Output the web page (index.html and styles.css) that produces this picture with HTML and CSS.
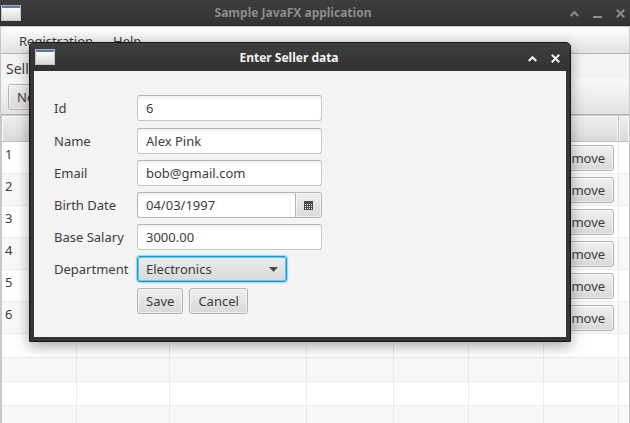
FILE: index.html
```html
<!DOCTYPE html>
<html lang="en">
<head>
<meta charset="utf-8">
<title>Sample JavaFX application</title>
<link rel="stylesheet" href="styles.css">
</head>
<body>
<main class="window">
  <header class="titlebar">
    <span class="app-icon"></span>
    <h1 class="title">Sample JavaFX application</h1>
    <div class="controls">
      <button class="control" aria-label="Roll up"><svg viewBox="0 0 9 9"><path d="M0.7 7 4.5 3.2 8.3 7"/></svg></button>
      <button class="control" aria-label="Minimize"><svg viewBox="0 0 9 9"><path d="M0 8H9"/></svg></button>
      <button class="control" aria-label="Close"><svg viewBox="0 0 9 9"><path d="M0.8 0.8 8.2 8.2M8.2 0.8 0.8 8.2"/></svg></button>
    </div>
  </header>
  <div class="content">
    <nav class="menubar">
      <button class="menu">Registration</button>
      <button class="menu">Help</button>
    </nav>
    <h2 class="heading">Seller List</h2>
    <div class="toolbar"><button class="button">New</button></div>
    <table class="sellers">
      <colgroup><col class="c-id"><col class="c-name"><col class="c-email"><col class="c-date"><col class="c-action"><col class="c-action"><col class="c-action"><col></colgroup>
      <thead><tr><th></th><th></th><th></th><th></th><th></th><th></th><th></th><th></th></tr></thead>
      <tbody>
        <tr><td>1</td><td></td><td></td><td></td><td></td><td></td><td><button class="button">Remove</button></td><td></td></tr>
        <tr><td>2</td><td></td><td></td><td></td><td></td><td></td><td><button class="button">Remove</button></td><td></td></tr>
        <tr><td>3</td><td></td><td></td><td></td><td></td><td></td><td><button class="button">Remove</button></td><td></td></tr>
        <tr><td>4</td><td></td><td></td><td></td><td></td><td></td><td><button class="button">Remove</button></td><td></td></tr>
        <tr><td>5</td><td></td><td></td><td></td><td></td><td></td><td><button class="button">Remove</button></td><td></td></tr>
        <tr><td>6</td><td></td><td></td><td></td><td></td><td></td><td><button class="button">Remove</button></td><td></td></tr>
        <tr class="empty"><td></td><td></td><td></td><td></td><td></td><td></td><td></td><td></td></tr>
        <tr class="empty"><td></td><td></td><td></td><td></td><td></td><td></td><td></td><td></td></tr>
        <tr class="empty"><td></td><td></td><td></td><td></td><td></td><td></td><td></td><td></td></tr>
        <tr class="empty"><td></td><td></td><td></td><td></td><td></td><td></td><td></td><td></td></tr>
      </tbody>
    </table>
  </div>
</main>

<section class="dialog" role="dialog" aria-labelledby="dialog-title">
  <header class="titlebar titlebar-active">
    <span class="app-icon"></span>
    <h2 class="title" id="dialog-title">Enter Seller data</h2>
    <div class="controls">
      <button class="control" aria-label="Roll up"><svg viewBox="0 0 9 9"><path d="M0.7 7 4.5 3.2 8.3 7"/></svg></button>
      <button class="control" aria-label="Close"><svg viewBox="0 0 9 9"><path d="M0.8 0.8 8.2 8.2M8.2 0.8 0.8 8.2"/></svg></button>
    </div>
  </header>
  <form class="form">
    <label for="id">Id</label>
    <input class="field" id="id" type="text" value="6">
    <label for="name">Name</label>
    <input class="field" id="name" type="text" value="Alex Pink">
    <label for="email">Email</label>
    <input class="field" id="email" type="text" value="bob@gmail.com">
    <label for="birth">Birth Date</label>
    <div class="date">
      <input class="field" id="birth" type="text" value="04/03/1997">
      <button class="button calendar" type="button" aria-label="Choose date">
        <svg viewBox="0 0 9 9" shape-rendering="crispEdges"><path fill="#4a4a4a" d="M0 0H9V9H0Z"/><path stroke="#e8e8e8" stroke-dasharray="1 1" d="M1 3.5H8M1 5.5H8M1 7.5H8"/></svg>
      </button>
    </div>
    <label for="salary">Base Salary</label>
    <input class="field" id="salary" type="text" value="3000.00">
    <label for="department">Department</label>
    <div class="combo">
      <select id="department"><option>Electronics</option></select>
      <svg class="arrow" viewBox="0 0 9 5"><path fill="#4a4a4a" d="M0 0H9L4.5 5Z"/></svg>
    </div>
    <div class="actions">
      <button class="button" type="button">Save</button>
      <button class="button" type="button">Cancel</button>
    </div>
  </form>
</section>
</body>
</html>
```
FILE: styles.css
```css
* { box-sizing: border-box; }

body {
  margin: 0;
  height: 100vh;
  overflow: hidden;
  background: #fff;
  color: #3c3c3c;
  font: 13px/18px "Noto Sans", sans-serif;
}

button, input, select { font: inherit; color: inherit; margin: 0; }

/* Window frame */
.window { min-height: 100vh; }

.titlebar {
  display: flex;
  align-items: center;
  height: 26px;
  padding: 0 5px 0 1px;
  background: linear-gradient(#3e3e3e, #323232);
  color: #8c8c8c;
}

.titlebar-active { height: 28px; padding: 0 10px 0 5px; color: #f4f4f2; border-radius: 4px 4px 0 0; }
.titlebar-active .title, .titlebar-active .controls { padding-top: 2px; }

.app-icon {
  width: 20px;
  height: 16px;
  border: 1px solid #c4c4c0;
  border-top-color: #9aa9bd;
  background: linear-gradient(#5479b3 2px, #fdfdfd 2px, #d9dcd5);
}

.title { flex: 1; margin: 0; font-size: 12px; line-height: 18px; font-weight: 700; text-align: center; }

.controls { display: flex; gap: 14px; padding-left: 5px; }

.control { width: 9px; height: 9px; padding: 0; border: 0; background: none; display: flex; }
.control svg { width: 9px; height: 9px; fill: none; stroke: currentColor; stroke-width: 2; }

/* Main content */
.content { border: solid #c8c8c8; border-width: 1px 1px 0 1px; }

.menubar {
  display: flex;
  height: 27px;
  padding: 0 8px;
  border-bottom: 1px solid #b5b5b5;
  background: linear-gradient(#fdfdfd, #e3e3e3);
}
.menu { padding: 2px 10px 0; border: 0; background: none; }

.heading { margin: 0; height: 25px; padding: 6px 5px 0; background: #f4f4f4; font-size: 14px; line-height: 18px; font-weight: 400; }

.toolbar { height: 36px; padding: 5px 7px; border-bottom: 1px solid #b5b5b5; background: linear-gradient(#fafafa, #e2e2e2); }

.button {
  height: 26px;
  padding: 0 8px;
  border: 1px solid #b4b4b4;
  border-radius: 3px;
  background: linear-gradient(#f0f0f0, #d9d9d9);
  box-shadow: inset 0 0 0 1px rgba(255, 255, 255, .55);
  line-height: 24px;
}

.sellers {
  width: 100%;
  table-layout: fixed;
  border-spacing: 0;
  border: solid #c8c8c8;
  border-width: 1px 0 0 1px;
}
.c-id { width: 75px; }
.c-name { width: 93px; }
.c-email { width: 137px; }
.c-date { width: 87px; }
.c-action { width: 75px; }

.sellers th {
  height: 26px;
  padding: 0;
  border: solid #c0c0c0;
  border-width: 0 1px 1px 0;
  background: linear-gradient(#f0f0f0, #d9d9d9);
  box-shadow: inset 1px 1px #fafafa, inset -1px 0 #fafafa;
}
.sellers td {
  height: 32px;
  padding: 3px 4px 2px 3px;
  border: solid #ececec;
  border-width: 0 1px 1px 0;
  vertical-align: top;
}
.sellers th:last-child, .sellers td:last-child { border-right: 0; }
.sellers tbody tr:nth-child(even) { background: #f8f8f8; }
.sellers .empty td { height: 24px; }
.sellers .button { display: block; margin-left: auto; }

/* Dialog */
.dialog {
  position: absolute;
  top: 42px;
  left: 29px;
  width: 542px;
  border: 1px solid #161616;
  border-radius: 5px 5px 1px 1px;
  background: #343536;
  box-shadow: 0 4px 14px rgba(0, 0, 0, .35);
}

.form {
  display: grid;
  grid-template-columns: 83px 185px;
  grid-template-rows: 27px;
  grid-auto-rows: 26px;
  row-gap: 6px;
  margin: 0 4px 4px;
  padding: 24px 20px 23px;
  background: #f4f4f4;
}
.form label { padding-top: 4px; }

.field {
  width: 100%;
  min-width: 0;
  height: 26px;
  padding: 0 8px;
  border: 1px solid #c8c8c8;
  border-top-color: #b4b4b4;
  border-radius: 3px;
  background: linear-gradient(#f0f0f0, #fff 4px);
  outline: 0;
}

.date { display: flex; }
.date .field { flex: 1; border-right: 0; border-color: #b4b4b4; border-radius: 3px 0 0 3px; }
.calendar { display: grid; place-items: center; width: 27px; padding: 0; border-radius: 0 3px 3px 0; }
.calendar svg { width: 9px; height: 9px; }

.combo { display: grid; width: 150px; align-items: center; }
.combo select, .arrow { grid-area: 1 / 1; }
.combo select {
  appearance: none;
  width: 100%;
  height: 26px;
  padding: 0 8px;
  border: 1px solid #039ed3;
  border-radius: 3px;
  background: linear-gradient(#ececec, #d9d9d9);
  box-shadow: 0 0 1px 1px #9bd6ea, inset 0 0 0 1px #74c5e2;
  outline: 0;
}
.arrow { justify-self: end; width: 9px; height: 5px; margin-right: 9px; pointer-events: none; }

.actions { grid-column: 2; display: flex; gap: 6px; }
```
